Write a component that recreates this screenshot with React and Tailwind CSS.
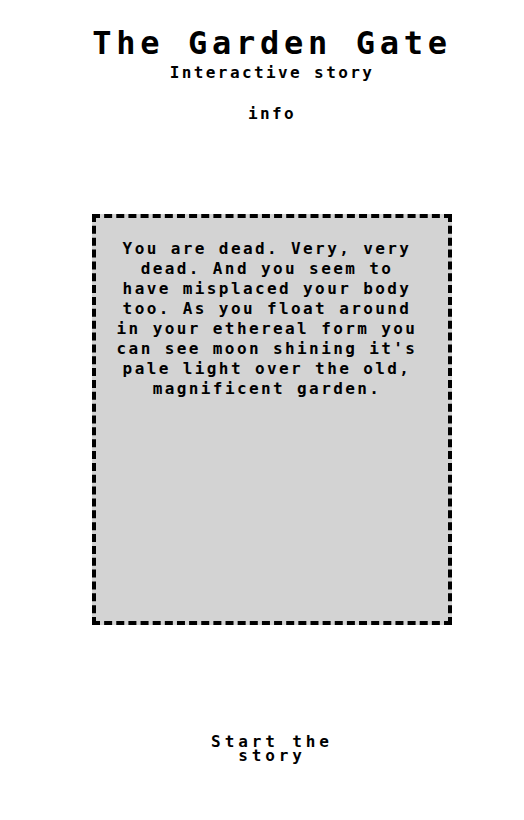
import React from 'react'

const pixel = { fontFamily: '"DejaVu Sans Mono", "Liberation Mono", monospace' }

function App() {
  return (
    <div className="min-h-[820px] bg-white text-black flex flex-col items-center font-bold pl-[20px]" style={pixel}>
      <h1 className="mt-[24px] text-[32px] leading-[38px] tracking-[4.7px] font-bold">The Garden Gate</h1>
      <p className="mt-[1px] text-[16px] leading-[20px] tracking-[2.4px]">Interactive story</p>
      <p className="mt-[21px] text-[16px] leading-[20px] tracking-[2.4px]">info</p>

      {/* story panel */}
      <div className="mt-[90px] w-[360px] h-[411px] border-4 border-dashed border-black bg-[#d3d3d3] pl-[18px] pr-[28px] pt-[21px]">
        <p className="text-[16px] leading-[20px] tracking-[2.4px] text-center">
          You are dead. Very, very dead. And you seem to have misplaced your body too. As you float around in your ethereal form you can see moon shining it's pale light over the old, magnificent garden.
        </p>
      </div>

      <button className="mt-[110px] w-[150px] text-[16px] leading-[14px] tracking-[3.9px] font-bold text-center">
        Start the story
      </button>
    </div>
  )
}

export default App
